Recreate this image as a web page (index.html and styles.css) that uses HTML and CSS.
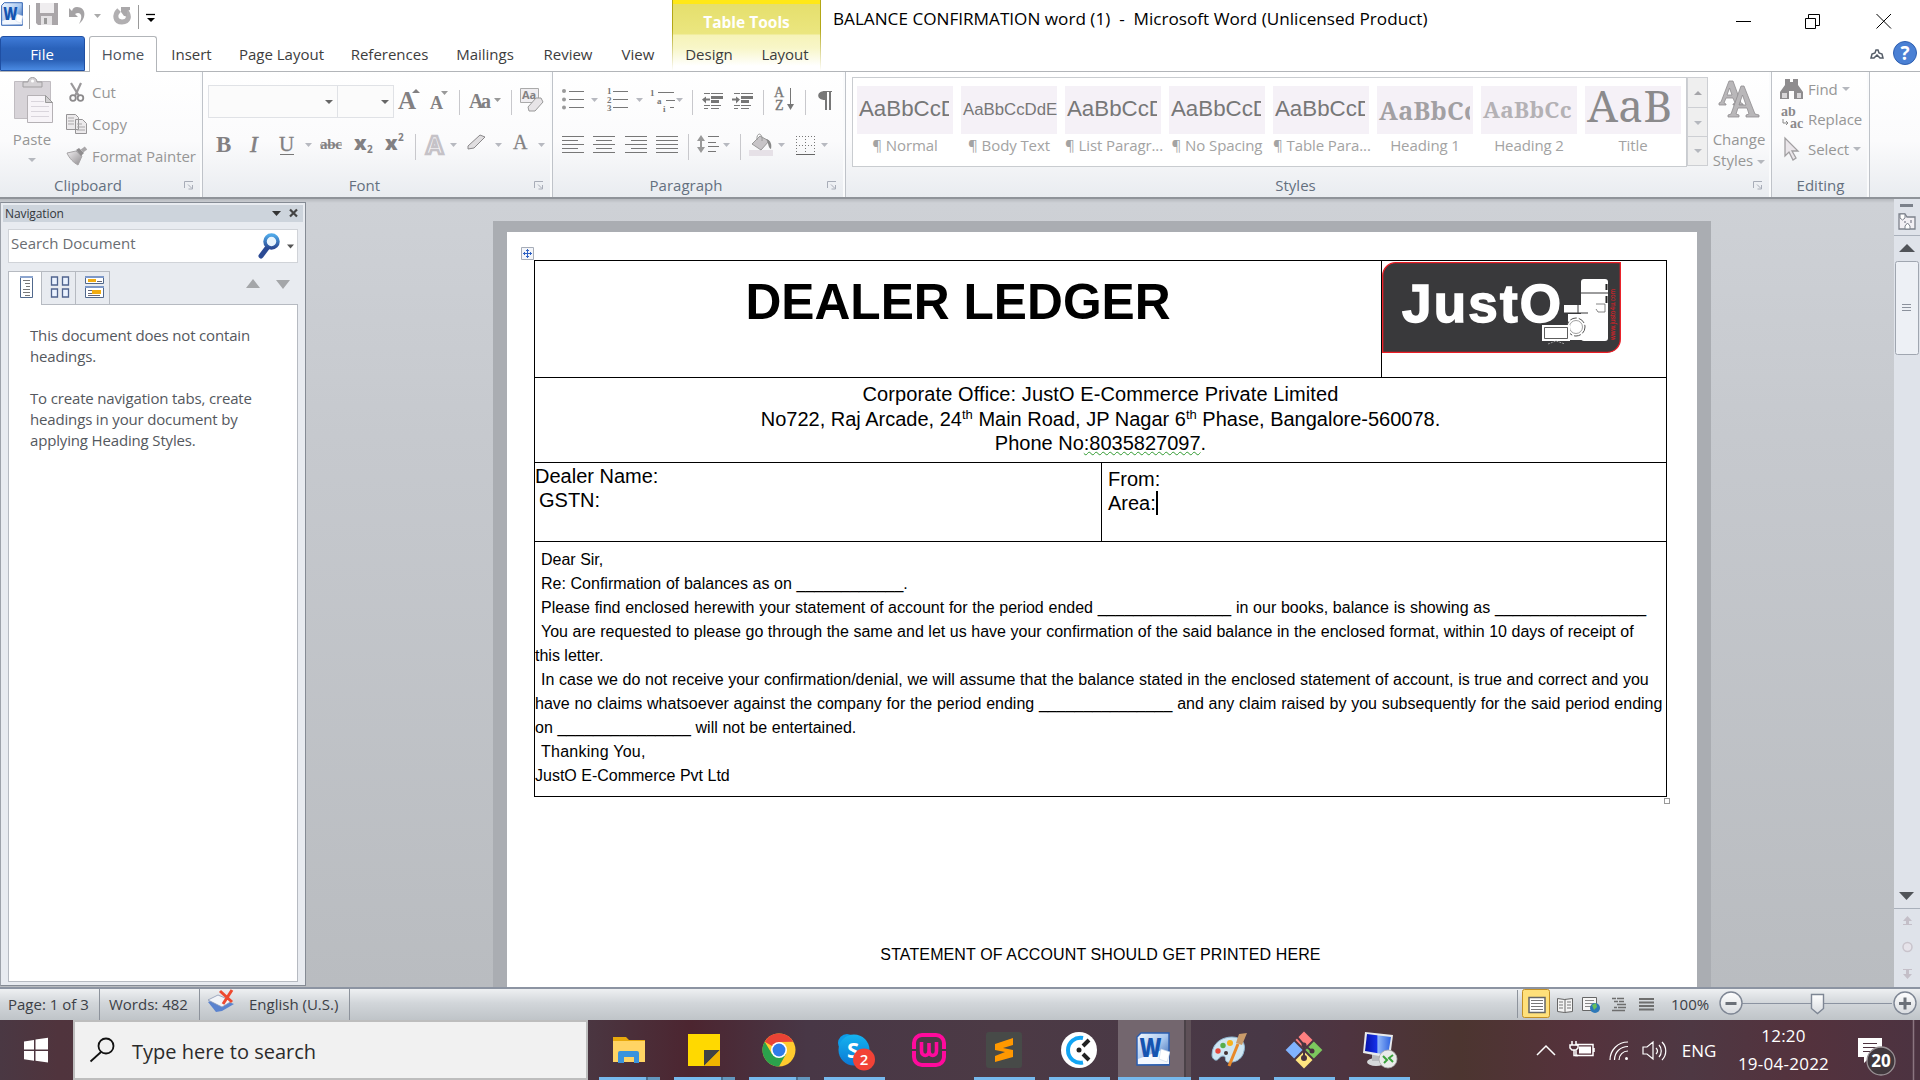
FILE: index.html
```html
<!DOCTYPE html>
<html lang="en">
<head>
<meta charset="utf-8">
<title>BALANCE CONFIRMATION word (1) - Microsoft Word</title>
<link rel="stylesheet" href="styles.css">
</head>
<body>
<svg class="defs" width="0" height="0" aria-hidden="true">
  <defs>
    <linearGradient id="gMetal" x1="0" y1="0" x2="1" y2="1"><stop offset="0" stop-color="#f0eef0"/><stop offset="1" stop-color="#8f8c8f"/></linearGradient>
    <linearGradient id="gBtn" x1="0" y1="0" x2="0" y2="1"><stop offset="0" stop-color="#fff"/><stop offset="1" stop-color="#d8dbdf"/></linearGradient>
    <linearGradient id="gWord" x1="0" y1="0" x2="1" y2="1"><stop offset="0" stop-color="#f4f9ff"/><stop offset=".5" stop-color="#a9c8ef"/><stop offset="1" stop-color="#2758a8"/></linearGradient>
    <linearGradient id="gScreen" x1="0" y1="0" x2="1" y2="0"><stop offset="0" stop-color="#0712a8"/><stop offset=".45" stop-color="#1430e8"/><stop offset=".5" stop-color="#8fb6f7"/><stop offset="1" stop-color="#2f63e0"/></linearGradient>
    <linearGradient id="gSkype" x1="0" y1="0" x2="0" y2="1"><stop offset="0" stop-color="#14b4f0"/><stop offset="1" stop-color="#0b78d4"/></linearGradient>
    <linearGradient id="gLens" x1="0" y1="0" x2="0" y2="1"><stop offset="0" stop-color="#4fa8e8"/><stop offset="1" stop-color="#2b4a94"/></linearGradient>
    <symbol id="launch" viewBox="0 0 10 9"><path d="M.5 7V.5H9M4 3.500l4 4M8.500 4v4h-4" fill="none" stroke="#a8adb8"/></symbol>
    <symbol id="word" viewBox="0 0 34 34">
      <path d="M5 1h28v32H1V5z" fill="url(#gWord)" stroke="#2a5db0" stroke-width="1.400"/>
      <path d="M2 27l24-9 7 3v11H2z" fill="#f4f8fe"/>
      <text x="3.500" y="25" font-family="Open Sans" font-weight="800" font-size="26" textLength="22" lengthAdjust="spacingAndGlyphs" fill="#1554b0">W</text>
      <path d="M25 17l9 3-3 10-8-3z" fill="#fff" stroke="#c3d3ea" stroke-width=".6"/>
    </symbol>
  </defs>
</svg>

<header class="top">
  <div class="quick">
    <svg viewBox="0 0 34 34" width="22" height="24" preserveAspectRatio="none"><use href="#word"/></svg>
    <svg viewBox="23 0 140 36" width="140" height="36">
      <path d="M29.500 5v24M138.500 5v24" stroke="#9a9a9a"/>
      <path d="M36 3h22v22H38l-2-2z" fill="#aaa6a9"/><path d="M40 3h14v10H40z" fill="#efedef"/><path d="M41 16h11v9H41z" fill="#e4e2e4"/><path d="M44 18h3v6h-3z" fill="#999"/>
      <path d="M69 8v9h9l-3-3c5-3 9 1 4 10 8-6 7-17-2-17-3 0-4 1-5 4z" fill="#a5a3a5"/>
      <path d="M94 14h7l-3.500 4z" fill="#aaa"/>
      <path d="M119 10c-5 5-4 12 3 12s8-6 4-11" fill="none" stroke="#b1afb1" stroke-width="5"/><path d="M121 7h9v3l-3 1v5h-3l-3-4z" fill="#aaa8aa"/>
      <path d="M146 14.500h9" stroke="#000" stroke-width="1.300"/><path d="M147 18h8l-4 4z"/>
    </svg>
  </div>
  <div class="context"><span>Table Tools</span></div>
  <div class="wintitle"><span class="caption">BALANCE CONFIRMATION word (1)&nbsp; -&nbsp; Microsoft Word (Unlicensed Product)</span>
    <svg viewBox="1730 0 190 36" width="190" height="36" fill="none" stroke="#000"><path d="M1736 21.500h15M1805.500 18.500h10v10h-10zM1808.500 18v-3.500h11v11h-3.500M1876.500 14l14.500 14.500M1891 14l-14.500 14.500"/></svg>
  </div>
  <nav class="tabs">
    <a class="tab file">File</a><a class="tab home">Home</a><a class="tab w69">Insert</a><a class="tab w111">Page Layout</a><a class="tab w105">References</a><a class="tab w86">Mailings</a><a class="tab w80">Review</a><a class="tab w64">View</a><a class="tab w74">Design</a><a class="tab w78">Layout</a>
    <svg class="help" viewBox="1860 36 60 35" width="60" height="35"><path d="M1871 58l1-4 3-1 1-3h2l1 3 3 1 1 4h-3l-3-3-3 3z" fill="none" stroke="#555d68" stroke-width="1.500"/><circle cx="1905" cy="53" r="11.500" fill="#4a80d4" stroke="#2e5fb0"/><text x="1905" y="60" text-anchor="middle" font-family="Open Sans" font-weight="700" font-size="19" fill="#fff">?</text></svg>
  </nav>
</header>

<section class="ribbon">
  <div class="group clip">
    <div class="body">
      <div class="big paste">
        <svg viewBox="8 76 48 50" width="48" height="50"><path d="M14.500 81.500h36v37h-36z" fill="#d8d4d9" stroke="#c0bcc1"/><path d="M23 87v-5h5c0-6 9-6 9 0h5v5z" fill="#d5d2d5" stroke="#a19fa1"/><circle cx="32.500" cy="81" r="1.500" fill="#fff"/><path d="M27.500 95.500h18l7 7v20h-25z" fill="#f7f4f8" stroke="#b5b1b5"/><path d="M45.500 95.500v7h7z" fill="#d2d0d2" stroke="#999"/><path d="M31 101.500h13M31 106.500h18M31 111.500h18M31 116.500h18" stroke="#d9d5dc"/></svg>
        <span>Paste</span><i class="arr"></i>
      </div>
      <div class="stack">
        <div class="cmd"><svg viewBox="64 80 26 24" width="26" height="24"><path d="M71 83l8 13M81 83l-6 13" stroke="#9a989a" stroke-width="2.200"/><circle cx="73" cy="98" r="2.800" fill="none" stroke="#8c8a8c" stroke-width="1.800"/><circle cx="80.500" cy="98" r="2.800" fill="none" stroke="#8c8a8c" stroke-width="1.800"/></svg>Cut</div>
        <div class="cmd"><svg viewBox="64 112 26 24" width="26" height="24"><path d="M66.500 114.500h9l3 3v12h-12zM75.500 119.500h7l4 4v10h-11z" fill="#eceaec" stroke="#969496"/><path d="M68 118h6M68 121h6M68 124h6M77 124h5M77 127h8M77 130h8" stroke="#a9a7a9"/></svg>Copy</div>
        <div class="cmd"><svg viewBox="64 144 26 24" width="26" height="24"><path d="M67 153l9-2 6 5-4 9c-4-2-9-7-11-12z" fill="url(#gMetal)" stroke="#a5a3a5"/><path d="M76 150l3-2 5 5-3 3z" fill="#8f8d8f"/><path d="M82 151l4-3" stroke="#a9a7a9" stroke-width="4"/></svg>Format Painter</div>
      </div>
    </div>
    <footer><span>Clipboard</span><svg width="10" height="9"><use href="#launch"/></svg></footer>
  </div>

  <div class="group font">
    <div class="tools row1">
      <div class="combo face"><i class="arr dark"></i></div><div class="combo size"><i class="arr dark"></i></div>
      <svg viewBox="395 85 158 34" width="158" height="34" font-family="Liberation Serif" font-weight="700" fill="#828082"><text x="399" y="109" font-size="25">A</text><path d="M413 93l4-4 4 4z"/><text x="431" y="109" font-size="18">A</text><path d="M442 91h7l-3.500 4zM495 98h7l-3.500 4z" fill="#999"/><text x="470" y="108" font-size="20" textLength="22">Aa</text><path d="M460.500 90v25M512.500 90v25" stroke="#c8c8cc"/><path d="M521.500 88.500h18v14h-18z" fill="#f0eef1" stroke="#aaa"/><text x="523" y="99" font-size="11" font-family="Open Sans">Aa</text><path d="M529 107l8-9 5 0 2 4-8 9-6 0z" fill="#e7e4e7" stroke="#999"/></svg>
    </div>
    <div class="tools row2">
      <svg viewBox="208 126 345 40" width="345" height="40" font-family="Liberation Serif" font-weight="700" fill="#828082"><text x="216" y="152" font-size="23">B</text><text x="250" y="152" font-size="23" font-style="italic" font-weight="400" stroke="#828082" stroke-width=".6">I</text><text x="279" y="151" font-size="21" font-weight="400" stroke="#828082" stroke-width=".3">U</text><path d="M280 154.500h14M320 145h22" stroke="#777"/><text x="320" y="149" font-size="15" textLength="22">abc</text><text x="354" y="150" font-size="20" font-family="Open Sans" font-weight="800">x</text><text x="367" y="153" font-size="10" font-family="Open Sans">2</text><text x="385" y="150" font-size="20" font-family="Open Sans" font-weight="800">x</text><text x="398" y="141" font-size="10" font-family="Open Sans">2</text><path d="M415.500 134v26" stroke="#c8c8cc"/><text x="426" y="154" font-size="25" font-family="Open Sans" fill="#f6f5f7" stroke="#c5c2c7" stroke-width="2.500">A</text><path d="M305 143h7l-3.500 4zM450 143h7l-3.500 4zM495 143h7l-3.500 4zM538 143h7l-3.500 4z" fill="#b7b9c0"/><path d="M468 146l12-11 5 2-11 11-6 1z" fill="#e0dee0" stroke="#8a888a"/><text x="513" y="149" font-size="20" font-weight="400" stroke="#888" stroke-width=".3">A</text></svg>
    </div>
    <footer><span>Font</span><svg width="10" height="9"><use href="#launch"/></svg></footer>
  </div>

  <div class="group para">
    <div class="tools row1">
      <svg viewBox="558 85 285 36" width="285" height="36" fill="#777"><g fill="#999"><circle cx="564" cy="91" r="2"/><circle cx="564" cy="99.500" r="2"/><circle cx="564" cy="107.500" r="2"/></g><path d="M569 91.500h15M569 99.500h15M569 107.500h15M613 91.500h15M613 99.500h15M613 107.500h15" stroke="#777"/><g font-family="Liberation Serif" font-weight="700" font-size="9"><text x="607" y="94">1</text><text x="607" y="103">2</text><text x="607" y="111">3</text><text x="650" y="96">1</text><text x="657" y="104">a</text><text x="663" y="112">i</text></g><path d="M658 92.500h16M666 100.500h9M670 107.500h4" stroke="#777"/><path d="M591 98h7l-3.500 4zM636 98h7l-3.500 4zM676 98h7l-3.500 4z" fill="#b7b9c0"/><path d="M692.500 90v25M763.500 90v25M805.500 90v25" stroke="#c8c8cc"/>
      <g id="dent"><path d="M704 93.500h6M711 93.500h12M704 105.500h6M711 105.500h10M711 108.500h8M704 108.500h4" stroke="#777"/><path d="M711 96h12v3h-12zM711 100h8v3h-8z"/></g><path d="M702 99.500l4-3v2h4v2h-4v3z"/>
      <use href="#dent" x="30"/><path d="M740 99.500l-4-3v2h-4v2h4v3z"/>
      <g font-family="Liberation Serif" font-size="14" stroke="#777" stroke-width=".3"><text x="774" y="97">A</text><text x="775" y="110">Z</text></g><path d="M790.500 88v19" stroke="#777"/><path d="M787 104h7l-3.500 6z"/>
      <path d="M825 91h7v1h-1v18h-2V92h-2v18h-2v-10c-9 0-9-9 0-9z"/></svg>
    </div>
    <div class="tools row2">
      <svg viewBox="558 126 285 40" width="285" height="40" fill="#777"><g stroke="#777"><path d="M562 136.500h22M562 140.500h16M562 144.500h22M562 148.500h16M562 152.500h22M593 136.500h22M596 140.500h16M593 144.500h22M596 148.500h16M593 152.500h22M625 136.500h22M631 140.500h16M625 144.500h22M631 148.500h16M625 152.500h22M656 136.500h22M656 140.500h22M656 144.500h22M656 148.500h22M656 152.500h22M708 136.500h11M708 142.500h8M708 146.500h11M708 151.500h8"/><path d="M796 154.500h19" stroke="#666"/><path d="M796.500 136v18M814.500 136v18M805.500 136v18M796 136.500h19M796 145.500h19" stroke-dasharray="1 2"/></g><path d="M697 141l4-6 4 6h-3v3h-2v-3zM697 147l4 6 4-6h-3v-3h-2v3z" fill="#999"/><path d="M688.500 134v26M740.500 134v26" stroke="#c8c8cc"/><path d="M723 143h7l-3.500 4zM778 143h7l-3.500 4zM821 143h7l-3.500 4z" fill="#b7b9c0"/><path d="M749 150h24v6h-24z" fill="#e6e1e7"/><path d="M752 144l8-8 9 5-8 9z" fill="#c7c4c7" stroke="#999"/><path d="M757 140c-1-8 6-8 5 1" fill="none" stroke="#999"/><path d="M766 139c5 1 6 6 5 10-3-1-2-5-5-10z" fill="#888"/></svg>
    </div>
    <footer><span>Paragraph</span><svg width="10" height="9"><use href="#launch"/></svg></footer>
  </div>

  <div class="group styles">
    <div class="body">
      <div class="gallery">
        <div class="style"><b class="p20">AaBbCcD</b><span>¶ Normal</span></div>
        <div class="style"><b class="p17">AaBbCcDdE</b><span>¶ Body Text</span></div>
        <div class="style"><b class="p20">AaBbCcD</b><span>¶ List Paragr...</span></div>
        <div class="style"><b class="p20">AaBbCcD</b><span>¶ No Spacing</span></div>
        <div class="style"><b class="p20">AaBbCcD</b><span>¶ Table Para...</span></div>
        <div class="style"><b class="h1">AaBbCc</b><span>Heading 1</span></div>
        <div class="style"><b class="h2">AaBbCc</b><span>Heading 2</span></div>
        <div class="style"><b class="ttl">AaB</b><span>Title</span></div>
      </div>
      <div class="scroller"><i class="arr up"></i><i class="arr"></i><i class="arr bar"></i></div>
      <div class="big change">
        <svg viewBox="1712 78 50 44" width="50" height="44" fill="#b9b7b9" stroke="#8f8d8f" stroke-width=".8"><path fill-rule="evenodd" d="M1717 105v-2l2-1 8-21h4l8 22 2 1v1h-10v-1l2-1-2-5h-7l-2 5 2 1v1zM1725 95h5l-2.500-7z"/><path fill-rule="evenodd" d="M1726 117v-2l3-1 10-28h3l11 28 4 1v2h-13v-2l3-1-2-6h-9l-2 6 3 1v2zM1737 105h7l-3.500-10z"/></svg>
        <span>Change</span><span>Styles <i class="arr"></i></span>
      </div>
    </div>
    <footer><span>Styles</span><svg width="10" height="9"><use href="#launch"/></svg></footer>
  </div>

  <div class="group edit">
    <div class="stack">
      <div class="cmd"><svg viewBox="1778 77 30 24" width="30" height="24"><path d="M1785 79h5v3h3v-3h5v6l5 7v7h-9v-8h-5v8h-9v-7l5-7z" fill="#8e8c8e"/><path d="M1782 93h5v5h-5zM1797 93h4v5h-4z" fill="#d8d6d8"/></svg>Find <i class="arr"></i></div>
      <div class="cmd"><svg viewBox="1778 107 30 24" width="30" height="24" font-family="Liberation Serif" font-weight="700" fill="#8b898b" font-size="14"><text x="1781" y="116">ab</text><text x="1790" y="128">ac</text><path d="M1783 119v4h5M1786 121l2 2-2 2" fill="none" stroke="#888"/></svg>Replace</div>
      <div class="cmd"><svg viewBox="1778 136 30 28" width="30" height="28"><path d="M1785 139v18l4-4 4 8 3-2-4-7h6z" fill="#eae6ea" stroke="#a19fa1" stroke-width="1.300"/></svg>Select <i class="arr"></i></div>
    </div>
    <footer><span>Editing</span></footer>
  </div>
</section>

<main class="work">
  <aside class="nav">
    <div class="navhead"><span>Navigation</span><svg viewBox="268 205 36 17" width="36" height="17"><path d="M273 211h9l-4.500 5z" fill="#333"/><path d="M291 209.500l7 7M298 209.500l-7 7" stroke="#444" stroke-width="2.200"/></svg></div>
    <div class="search"><span>Search Document</span><svg viewBox="255 230 42 32" width="42" height="32"><path d="M267 248l-6 8" stroke="#2b4a94" stroke-width="5" stroke-linecap="round"/><circle cx="271.500" cy="241.500" r="6.500" fill="#e8f4fd" stroke="url(#gLens)" stroke-width="3.500"/><path d="M287 244.500h7l-3.500 4z" fill="#555"/></svg></div>
    <div class="navtabs">
      <div class="nt on"><svg viewBox="9 271 34 33" width="34" height="33"><path d="M20.500 275.500h12v21h-12z" fill="#fff" stroke="#50688c"/><path d="M20 276h13" stroke="#8ca5cf" stroke-width="2"/><path d="M23 279.500h7M25 282.500h5M26 285.500h4M23 288.500h7M23 291.500h7M25 294.500h5" stroke="#777"/></svg></div>
      <div class="nt"><svg viewBox="42 271 34 33" width="34" height="33" fill="#eaf2ff" stroke="#50648e" stroke-width="1.300"><path d="M51.500 276h6v8h-6zM62.500 276h6v8h-6zM51.500 288h6v8h-6zM62.500 288h6v8h-6z"/></svg></div>
      <div class="nt"><svg viewBox="76 271 34 33" width="34" height="33"><path d="M85.500 275.500h18v7h-18zM85.500 285.500h18v11h-18z" fill="#fff" stroke="#50688c"/><path d="M85 276h19M85 286h19" stroke="#7d98c8" stroke-width="2"/><path d="M88 278h8v3h-8zM92 289h9v4h-9z" fill="#f0ac12"/><path d="M97 280.500h5M88 289.500h4M88 292.500h4M88 294.500h12" stroke="#667"/></svg></div>
      <svg class="updown" viewBox="240 271 58 33" width="58" height="33" fill="#a4a6a9"><path d="M247 288h14l-7-9zM277 280h14l-7 9z"/></svg>
    </div>
    <div class="navbody"><p>This document does not contain<br>headings.</p><p>To create navigation tabs, create<br>headings in your document by<br>applying Heading Styles.</p></div>
  </aside>

  <div class="canvas">
    <article class="page">
      <svg class="grip" viewBox="0 0 13 13" width="13" height="13"><path d="M.5.5h12v12H.5z" fill="#f4f6fa" stroke="#a7adb8"/><path d="M6.500 2v9M2 6.500h9M5 3.500h3M5 9.500h3M3.500 5v3M9.500 5v3" stroke="#2f62c4"/></svg>
      <div class="ledger">
        <div class="r r1">
          <h1>DEALER LEDGER</h1>
          <div class="logo"><svg viewBox="1382 262 239 91" width="239" height="91">
            <path d="M1396 262.700h224.300v76.300a13 13 0 0 1-13 13.300H1382.700v-76.300a13 13 0 0 1 13.300-13.300z" fill="#39393b" stroke="#ed1c24" stroke-width="1.300"/>
            <text x="1402" y="322" font-family="Liberation Sans" font-weight="700" font-size="53" textLength="159" fill="#fff" stroke="#fff" stroke-width="1.500">JustO</text>
            <rect x="1581" y="279" width="27" height="62" rx="3" fill="#fff"/><path d="M1564 305h24v8h-24zM1568 314h32v26h-32z" fill="#fff"/>
            <path d="M1581 293h27M1578 305v8M1564 313h24" stroke="#39393b"/><path d="M1606.500 284v6M1606.500 296v7" stroke="#222" stroke-width="2"/><path d="M1596 304h9v8h-7l-2-3" fill="none" stroke="#666" stroke-width=".8"/>
            <circle cx="1576" cy="327" r="9" fill="none" stroke="#555" stroke-dasharray="7 2"/><circle cx="1576" cy="327" r="6.500" fill="none" stroke="#777" stroke-width=".7"/>
            <path d="M1542 325h28v16h-28z" fill="#fff"/><path d="M1544.500 327.500h23v11h-23z" fill="#fff" stroke="#333" stroke-width=".8"/><path d="M1548 344l8-3 9 3" fill="none" stroke="#999" stroke-dasharray="2 1"/>
            <text transform="translate(1614.500 340) rotate(-90)" font-family="Liberation Sans" font-size="6.500" textLength="51" fill="#ed1c24">www.justo4u.com</text></svg></div>
        </div>
        <div class="r r2"><p class="corp">Corporate Office: JustO E-Commerce Private Limited</p><p>No722, Raj Arcade, 24<sup>th</sup> Main Road, JP Nagar 6<sup>th</sup> Phase, Bangalore-560078.</p><p>Phone No<u>:8035827097</u>.</p></div>
        <div class="r r3"><div class="cell dealer"><p>Dealer Name:</p><p class="gst">GSTN:</p></div><div class="cell from"><p>From:</p><p class="area">Area:</p></div></div>
        <div class="r r4">
          <p class="in">Dear Sir,</p>
          <p class="in l2">Re: Confirmation of balances as on ____________.</p>
          <p class="in l3">Please find enclosed herewith your statement of account for the period ended _______________ in our books, balance is showing as _________________</p>
          <p class="in l4">You are requested to please go through the same and let us have your confirmation of the said balance in the enclosed format, within 10 days of receipt of</p>
          <p>this letter.</p>
          <p class="in l6">In case we do not receive your confirmation/denial, we will assume that the balance stated in the enclosed statement of account, is true and correct and you</p>
          <p class="l7">have no claims whatsoever against the company for the period ending _______________ and any claim raised by you subsequently for the said period ending</p>
          <p class="l2">on _______________ will not be entertained.</p>
          <p class="in thanks">Thanking You,</p>
          <p>JustO E-Commerce Pvt Ltd</p>
        </div>
        <i class="corner"></i>
      </div>
      <p class="stmt">STATEMENT OF ACCOUNT SHOULD GET PRINTED HERE</p>
    </article>
  </div>

  <div class="vscroll"><svg viewBox="1894 199 26 788" width="26" height="788">
    <path d="M1900 204h13v3h-13z" fill="#7b818b"/><path d="M1899 214h6l2 3h8v12h-16z" fill="#f2f0f4" stroke="#7d828c" stroke-width="1.300"/><path d="M1900 214h5v4l-2.500 2-2.500-2zM1905 229v-3l2.500-3 2.500 3v3z" fill="#fff" stroke="#7d828c"/><path d="M1904 222h2M1911 220v3" stroke="#667"/>
    <path d="M1894 235.500h26M1894 908.500h26" stroke="#a9b0bb"/><path d="M1899 252h16l-8-8zM1899 892h15l-7.500 8z" fill="#505358"/>
    <rect x="1895.500" y="261.500" width="23" height="93" rx="2" fill="#edf0f5" stroke="#a0a6b0"/><path d="M1902 304.500h9M1902 307.500h9M1902 310.500h9" stroke="#8b919c"/>
    <g fill="#c4bfc8"><path d="M1903 921h9l-4.500-5zM1903 925h9v-1h-3v-3h-3v3h-3zM1903 974h9l-4.500 5zM1903 969h9v1h-3v4h-3v-4h-3z"/></g><circle cx="1907.500" cy="947" r="4.500" fill="#e6e3ea" stroke="#c9c4cc" stroke-width="1.500"/></svg></div>
</main>

<div class="status">
  <span class="s1">Page: 1 of 3</span><span class="s2">Words: 482</span>
  <span class="s3"><svg viewBox="205 991 30 26" width="30" height="26"><path d="M208 1004l10-4 16 6-12 7-6 1z" fill="#5a83cf"/><path d="M208 1002l10-5 14 6-10 6z" fill="#f2f4f8" stroke="#8c98b4" stroke-width=".8"/><path d="M220 993l12 11M232 992l-9 14" stroke="#ee4a30" stroke-width="3"/></svg>English (U.S.)</span>
  <div class="views">
    <svg viewBox="1517 989 150 31" width="150" height="31"><path d="M1517.500 990v28" stroke="#8d939c"/><rect x="1522.500" y="989.500" width="27" height="28" rx="2" fill="#ffe07a" stroke="#c28f26"/><path d="M1529 997.500h16v15h-16z" fill="#fff" stroke="#666" stroke-width="1.500"/><path d="M1531 1000.500h12M1531 1003.500h12M1531 1006.500h12M1531 1009.500h12" stroke="#777"/>
    <path d="M1557.500 998.500l7 1 8-1v13l-8 1-7-1zM1565 999v14" fill="#f4f4f4" stroke="#666"/><path d="M1559 1002h4M1559 1005h4M1559 1008h4M1567 1002h4M1567 1005h4M1567 1008h4" stroke="#777"/>
    <path d="M1582.500 997.500h14v13h-14z" fill="#f6f6f6" stroke="#666"/><path d="M1585 1000.500h9M1585 1003.500h9M1585 1006.500h6" stroke="#888"/><circle cx="1595" cy="1008" r="5" fill="#2d78b8"/><path d="M1592 1005l4-2 1 4-3 3z" fill="#66c05a"/>
    <path d="M1612 998.500h4M1617 998.500h7M1614 1001.500h4M1619 1001.500h5M1617 1004.500h9M1614 1007.500h3M1618 1007.500h8M1612 1010.500h13" stroke="#6e6e6e" stroke-width="1.600"/><path d="M1639 999h15M1639 1002.500h15M1639 1006h15M1639 1009.500h15" stroke="#6e6e6e" stroke-width="2"/></svg>
    <span>100%</span>
    <svg viewBox="1714 989 206 31" width="206" height="31"><path d="M1742 1003.500h150" stroke="#8b93a1"/><g fill="url(#gBtn)" stroke="#7e8694" stroke-width="1.400"><circle cx="1731" cy="1003" r="11"/><circle cx="1905" cy="1003" r="11"/><path d="M1811.500 994.500h12v14l-6 5-6-5z"/></g><path d="M1725.500 1003.500h11M1899 1003.500h12M1905 997.500v12" stroke="#6b7078" stroke-width="3"/></svg>
  </div>
</div>

<div class="taskbar">
  <svg class="start" viewBox="0 1020 73 60" width="73" height="60" fill="#fff"><path d="M24 1041.500l10-1.500v9.500H24zM35.500 1039.500l12.500-1.800v11.800H35.500zM24 1051h10v9.800l-10-1.500zM35.500 1051H48v11.600l-12.500-1.800z"/></svg>
  <div class="tsearch"><svg viewBox="88 1035 30 30" width="30" height="30" fill="none" stroke="#111" stroke-width="1.800"><circle cx="106" cy="1046" r="7.500"/><path d="M101 1052l-10.500 9.500"/></svg><span>Type here to search</span></div>
  <div class="apps">
    <div class="app two"><svg viewBox="606 1029 48 42" width="48" height="42"><path d="M613 1037h13l3 3h16v22h-32z" fill="#e8a90c"/><path d="M613 1041h32v21h-32z" fill="#ffd464"/><path d="M618 1063v-10a2 2 0 0 1 2-2h17a2 2 0 0 1 2 2v10h-5v-6h-10v6z" fill="#3a93dc"/></svg></div>
    <div class="app two"><svg viewBox="681 1029 48 42" width="48" height="42"><path d="M688 1034h32v32h-32z" fill="#ffd900"/><path d="M704 1050h16l-16 16z" fill="#414244"/><path d="M720 1050v16h-16z" fill="#f0b400"/></svg></div>
    <div class="app two"><svg viewBox="756 1029 48 42" width="48" height="42"><circle cx="779" cy="1050" r="16.500" fill="#ffcb2e"/><path d="M779 1050L764.700 1041.700A16.500 16.500 0 0 1 793.300 1041.700L779 1042z" fill="#e94335"/><path d="M764.700 1041.700A16.500 16.500 0 0 0 779 1066.500L786 1054 772 1054z" fill="#2ba24c"/><circle cx="779" cy="1050" r="8" fill="#fff"/><circle cx="779" cy="1050" r="6.400" fill="#2f7be8"/></svg></div>
    <div class="app"><svg viewBox="831 1029 48 42" width="48" height="42"><circle cx="847" cy="1043" r="9" fill="#0d9be8"/><circle cx="854" cy="1050" r="15.500" fill="url(#gSkype)"/><text x="847" y="1058" font-family="Open Sans" font-weight="700" font-size="22" fill="#fff">S</text><circle cx="864" cy="1059.500" r="11" fill="#f24236"/><text x="864" y="1065" text-anchor="middle" font-family="Open Sans" font-weight="600" font-size="15" fill="#fff">2</text></svg></div>
    <div class="app idle"><svg viewBox="906 1029 48 42" width="48" height="42"><rect x="914" y="1035" width="30" height="30" rx="8" fill="none" stroke="#ff0a9c" stroke-width="4"/><path d="M911 1050h7M940 1050h7" stroke="#4a3743" stroke-width="2"/><path d="M921.500 1042v9c0 6 7.500 6 7.500 0v-8 8c0 6 7.500 6 7.500 0v-9" fill="none" stroke="#ff0a9c" stroke-width="3.600"/></svg></div>
    <div class="app"><svg viewBox="981 1029 48 42" width="48" height="42"><rect x="986" y="1032" width="36" height="36" rx="3" fill="#474a48"/><path d="M995 1044l18-6v7l-10 3 10 2v7l-18 5v-6l10-4-10-2z" fill="#ff9800"/></svg></div>
    <div class="app"><svg viewBox="1056 1029 48 42" width="48" height="42"><circle cx="1079" cy="1050" r="18" fill="#fff"/><path d="M1083 1038a12.500 12.500 0 1 0 0 24.500" fill="none" stroke="#12a5f4" stroke-width="4"/><circle cx="1079" cy="1050" r="2.500" fill="#222"/><path d="M1083 1046l6-6M1083 1054l6 6" stroke="#222" stroke-width="4"/></svg></div>
    <div class="app active"><svg width="34" height="34"><use href="#word"/></svg></div>
    <div class="app"><svg viewBox="1206 1029 48 42" width="48" height="42"><path d="M1212 1055c0-12 10-18 20-18s14 7 12 14c-2 10-11 12-17 11-3-2 0-6-4-6s-4 5-8 4c-2-1-3-3-3-5z" fill="#cfe6f3" stroke="#90b8d2"/><circle cx="1218" cy="1051" r="2.700" fill="#e5483b"/><circle cx="1223" cy="1045.500" r="2.700" fill="#57ae4b"/><circle cx="1230" cy="1043" r="3" fill="#f7b21e"/><circle cx="1226" cy="1053" r="2" fill="#433"/><path d="M1238 1044l-9 22" stroke="#e88a2a" stroke-width="3"/><path d="M1236 1043l3-9 8-1-5 12z" fill="#c99b6a"/></svg></div>
    <div class="app"><svg viewBox="1281 1029 48 42" width="48" height="42"><g transform="rotate(45 1304 1050)"><path d="M1291 1037h12v12h-12z" fill="#ff8080"/><path d="M1305 1037h12v12h-12z" fill="#7cc95e"/><path d="M1291 1051h12v12h-12z" fill="#80b3ff"/><path d="M1305 1051h12v12h-12z" fill="#ffe680"/></g><path d="M1297 1037l7 8v12M1304 1045l8 6" fill="none" stroke="#4a3340" stroke-width="2"/><circle cx="1304" cy="1045" r="2.500" fill="#4a3340"/><circle cx="1304" cy="1058" r="3" fill="#4a3340"/><circle cx="1312" cy="1051" r="2.500" fill="#4a3340"/></svg></div>
    <div class="app"><svg viewBox="1356 1029 48 42" width="48" height="42"><ellipse cx="1376" cy="1062" rx="9" ry="4" fill="#d6d8da"/><path d="M1372 1053h7v8h-7z" fill="#b8babd"/><path d="M1365 1032l28 3-3 23-27-5z" fill="#e8eaec"/><path d="M1367 1034l24 3-3 18-23-4z" fill="url(#gScreen)"/><circle cx="1388" cy="1059" r="9" fill="#e9ebe9" stroke="#aaa" stroke-width=".8"/><path d="M1383 1056l4 4-3 3M1393 1055l-4 3 4 4" fill="none" stroke="#3aa23a" stroke-width="2"/></svg></div>
  </div>
  <div class="tray">
    <svg viewBox="1530 1020 146 60" width="146" height="60" fill="none" stroke="#fff" stroke-width="1.500"><path d="M1537 1055l9-9 9 9"/><path d="M1576 1044.500h17v11h-17v-5M1594 1048v4"/><path d="M1579 1046.500h12v7h-12z" fill="#fff" stroke="none"/><path d="M1572 1041v4M1576 1041v4M1570 1045h8v3l-2 2h-4l-2-2zM1574 1050v5.500h4"/><g stroke-width="1.200"><path d="M1610 1060c0-10 8-18 18-18M1614.500 1060c0-8 6-13.500 13.500-13.500M1619 1060c0-5 4-9 9-9"/><circle cx="1626.500" cy="1058.500" r="1.500" fill="#fff" stroke="none"/><path d="M1643 1047v7h4l6 5v-17l-6 5zM1656 1048c2 2 2 4 0 6M1659 1045c3 3 3 9 0 12M1662 1042c5 5 5 13 0 18"/></g></svg>
    <span class="lang">ENG</span>
    <div class="clock"><span>12:20</span><span>19-04-2022</span></div>
    <svg viewBox="1845 1020 75 60" width="75" height="60"><path d="M1858 1038h24v19h-12l-6 6v-6h-6z" fill="#fff"/><path d="M1863 1043.500h14M1863 1047.500h14M1863 1051.500h9" stroke="#4f3340" stroke-width="1.200"/><circle cx="1881" cy="1061" r="14" fill="#40373c" stroke="#9b9397" stroke-width="1.300"/><text x="1881" y="1067" text-anchor="middle" font-family="Open Sans" font-weight="700" font-size="17" fill="#fff">20</text><path d="M1913.500 1020v60" stroke="#8b7580" stroke-width="1.500"/></svg>
  </div>
</div>
</body>
</html>
```
FILE: styles.css
```css
* { box-sizing: border-box; }
html, body { margin: 0; height: 1080px; overflow: hidden; }
body { width: 1920px; display: flex; flex-direction: column; background: #fff; font: 15px/20px "Open Sans", "Noto Sans", sans-serif; color: #3d3d3d; }
p, h1 { margin: 0; }
svg { display: block; flex: none; }
.defs { position: absolute; }

/* title bar and tabs */
.top { height: 72px; display: grid; grid-template: 36px 36px / 672px 149px 1fr; background: #fff; }
.quick { grid-area: 1 / 1; display: flex; align-items: flex-start; padding-left: 1px; }
.quick svg:first-child { margin-top: 2px; }
.context { grid-area: 1 / 2 / 3 / 3; border-left: 1px solid #b9ad1c; border-right: 1px solid #b9ad1c; border-image: linear-gradient(#b3a716 0 40%, #fff 97%) 1; background: linear-gradient(#ffe817 0 4px, #e5df6c 4px, #ebe680 34px, #f6f3b8 35px, #f8f6c8 48px, #fff 66px); text-align: center; padding-top: 12px; color: #fff; font-weight: 700; font-size: 15.500px; }
.wintitle { grid-area: 1 / 3; display: flex; justify-content: space-between; align-items: center; padding-left: 12px; color: #000; }
.caption { font-size: 17.150px; line-height: 36px; white-space: nowrap; padding-top: 1px; }
.tabs { grid-area: 2 / 1 / 3 / 4; display: flex; border-bottom: 1px solid #b2b5b9; z-index: 1; }
.tab { display: block; line-height: 36px; text-align: center; height: 35px; }
.file { width: 85px; margin-right: 4px; padding-right: 1px; color: #fff; border: 1px solid #1f4fa3; border-radius: 3px 3px 0 0; background: linear-gradient(#3f7bd8, #2a62ba 35%, #2a60b6 70%, #4a8ae2); line-height: 34px; }
.home { width: 68px; height: 36px; border: 1px solid #b2b5b9; border-bottom: 0; border-radius: 3px 3px 0 0; background: #fff; line-height: 34px; color: #4c535c; }
.w69 { width: 69px; } .w111 { width: 111px; } .w105 { width: 105px; } .w86 { width: 86px; } .w80 { width: 80px; } .w64 { width: 60px; margin-right: 4px; } .w74 { width: 74px; } .w78 { width: 78px; }
.help { margin-left: auto; }

/* ribbon */
.ribbon { height: 127px; display: flex; background: linear-gradient(#fff, #fbfbfc 55%, #e9ecf0); border-bottom: 2px solid #8f9399; color: #969696; }
.group { display: flex; flex-direction: column; border-right: 1px solid #bfc3c9; box-shadow: inset -2px 0 #fafbfc; }
.group footer { margin-top: auto; height: 24px; display: grid; grid-template-columns: 1fr 26px; color: #64707f; text-align: center; line-height: 24px; }
.edit footer { grid-template-columns: 1fr; }
.group footer svg { margin: 8px 0 0 8px; }
.body { display: flex; }
.clip { width: 203px; } .font { width: 350px; } .para { width: 293px; } .styles { width: 926px; } .edit { width: 98px; }
.arr { display: inline-block; border: 4px solid transparent; border-top-color: #b5b8be; border-bottom: 0; vertical-align: 2px; }
.arr.dark { border-top-color: #666; }
.arr.up { border-top: 0; border-bottom: 4px solid #a5a5a9; }
.big { display: flex; flex-direction: column; align-items: center; }
.big span { line-height: 21px; }
.paste { width: 64px; padding-top: 4px; }
.paste span { margin: 3px 0 8px; }
.stack { display: flex; flex-direction: column; }
.clip .stack { padding-top: 4px; }
.cmd { display: flex; align-items: center; height: 32px; gap: 2px; white-space: nowrap; letter-spacing: -.05px; }
.cmd .arr { margin-left: 4px; }
.tools { display: flex; align-items: flex-start; padding-left: 5px; }
.row1 { padding-top: 13px; height: 54px; }
.row2 { height: 42px; }
.combo { height: 33px; border: 1px solid #e0e2e6; background: #fbfbfb; display: flex; justify-content: flex-end; align-items: center; padding-right: 4px; }
.face { width: 130px; border-right: 0; } .size { width: 57px; }
.styles .body { padding: 5px 0 0 6px; }
.gallery { width: 835px; height: 90px; border: 1px solid #c9ccd0; background: #fff; display: flex; gap: 8px; padding: 8px 0 0 4px; overflow: hidden; }
.style { width: 96px; flex: none; text-align: center; color: #a3a3a3; white-space: nowrap; }
.style b { display: block; height: 48px; background: #f5f1f7; overflow: hidden; padding: 0 3px; font: 20px/48px "Liberation Sans", Arial, sans-serif; color: #777; text-align: left; }
.style span { display: block; line-height: 23px; letter-spacing: -.1px; }
.style .p20 { font-size: 22.300px; line-height: 46px; border-right: 4px solid #f5f1f7; padding: 0 0 0 2px; }
.style .p17 { font-size: 16.800px; padding-left: 2px; }
.style .h1, .style .h2, .style .ttl { font-family: "Noto Serif", "Liberation Serif", serif; font-weight: 700; color: #a2a0a3; font-size: 25px; letter-spacing: .3px; padding-left: 2px; border-right: 3px solid #f5f1f7; padding-right: 0; }
.style .h2 { color: #b4b1b5; font-size: 22.500px; }
.style .ttl { font-weight: 400; font-size: 44px; line-height: 38px; color: #8b8a8c; }
.scroller { width: 21px; height: 89px; border: 1px solid #cdcfd3; background: linear-gradient(#cdcfd3, #cdcfd3) 0 29px / 100% 1px no-repeat, linear-gradient(#cdcfd3, #cdcfd3) 0 58px / 100% 1px no-repeat, #efefef; display: grid; grid-template-rows: 30px 29px 1fr; place-items: center; }
.scroller .bar { box-shadow: 0 -6px 0 -4px #b5b8be; }
.change { width: 60px; margin-left: 1px; padding-top: 1px; }
.change svg + span { margin-top: 7px; }
.edit .stack { padding: 2px 0 0 6px; }
.edit .cmd { height: 30px; gap: 0; }

/* workspace */
.work { height: 788px; display: flex; background: linear-gradient(#b6b9be 0, #ced1d6 4px, #c6c9ce 30%, #b9bcc0); }
.nav { width: 306px; margin-top: 3px; height: 784px; border: 1px solid #858b94; border-left-color: #9da2aa; background: #e8ebf0; padding: 2px; display: flex; flex-direction: column; }
.navhead { height: 17px; background: #cdd4dc; display: flex; justify-content: space-between; font-size: 12px; line-height: 17px; padding-left: 2px; color: #33373d; }
.navhead span { letter-spacing: -.1px; }
.search { margin: 7px 5px 8px; height: 34px; border: 1px solid #d0d3d8; background: #fff; display: flex; justify-content: space-between; align-items: center; padding-left: 2px; color: #6a6d72; }
.search span { padding-bottom: 6px; }
.navtabs { display: flex; margin: 0 5px; height: 34px; }
.nt { width: 34px; height: 34px; border: 1px solid #b6bac1; border-left-width: 0; overflow: hidden; }
.nt.on { border-left-width: 1px; border-bottom: 0; background: #fff; }
.updown { flex: 1; border-bottom: 1px solid #b6bac1; height: 34px; padding-left: 128px; }
.navbody { flex: 1; margin: 0 5px 1px; border: 1px solid #b6bac1; border-top: 0; background: #fff; padding: 20px 0 0 21px; color: #54585e; line-height: 21px; letter-spacing: -.16px; }
.navbody p + p { margin-top: 21px; }
.canvas { flex: 1; padding: 22px 183px 0 187px; overflow: hidden; }
.page { position: relative; height: 790px; background: #fff; border: 14px solid #aaadb2; border-top-width: 11px; border-bottom: 0; padding: 28px 30px 0 27px; color: #000; font: 16px/24px "Liberation Sans", Arial, sans-serif; }
.grip { position: absolute; left: 14px; top: 15px; }
.ledger { position: relative; border: 1px solid #000; border-bottom: 0; width: 1133px; }
.r { border-bottom: 1px solid #000; }
.r1 { height: 117px; display: grid; grid-template-columns: 846px 1fr; }
.r1 h1 { font-size: 49.700px; line-height: 57px; padding-top: 13px; text-align: center; }
.logo { border-left: 1px solid #000; padding-top: 1px; }
.r2 { height: 85px; padding-top: 4px; text-align: center; font-size: 20px; line-height: 24.500px; white-space: nowrap; }
.r2 sup { font-size: 13px; line-height: 0; vertical-align: 7px; }
.r2 .corp { letter-spacing: .1px; }
.r2 u { text-decoration: underline wavy #2f9a2f 1px; text-underline-offset: 1px; }
.r3 { height: 79px; display: grid; grid-template-columns: 566px 1fr; font-size: 20px; }
.dealer { padding-top: 1px; }
.gst { padding-left: 4px; }
.from { border-left: 1px solid #000; padding: 4px 0 0 6px; }
.area { width: max-content; border-right: 2px solid #000; }
.r4 { height: 255px; padding-top: 6px; white-space: nowrap; }
.in { padding-left: 6px; }
.l2 { word-spacing: .2px; } .l3 { word-spacing: .29px; } .l4 { word-spacing: .1px; } .l6 { word-spacing: .22px; } .l7 { word-spacing: .29px; }
.thanks { letter-spacing: .25px; }
.corner { position: absolute; right: -4px; bottom: -7px; width: 6px; height: 6px; border: 1px solid #999; background: #fff; }
.stmt { text-align: center; padding-top: 146px; letter-spacing: .12px; }
.vscroll { width: 26px; background: #dfe3ea; }

/* status bar */
.status { height: 33px; border-top: 2px solid #8c94a2; background: linear-gradient(#eef0f2, #d2d6da 45%, #bfc4c8); display: flex; line-height: 30px; color: #3c4046; }
.status > span { border-right: 1px solid #8d939c; white-space: nowrap; }
.s1 { width: 100px; padding-left: 8px; } .s2 { width: 100px; padding-left: 9px; }
.s3 { width: 150px; display: flex; align-items: flex-start; gap: 14px; padding-left: 5px; }
.views { margin-left: auto; display: flex; }
.views span { width: 47px; padding-left: 4px; }

/* taskbar */
.taskbar { height: 60px; display: flex; background: linear-gradient(90deg, #4a3843, #50343d 3%, #4a3843 30%, #4c2530 36%, #483746 42%, #4c3a45 52%, #483846 66%, #4e3440 70%, #4c3530 76%, #55323c 82%, #4e3843 88%, #54323d 94%, #4c3341); color: #fff; }
.tsearch { width: 515px; border: 2px solid #bdbdbd; background: #f1f1f1; color: #2b2b2b; display: flex; align-items: center; gap: 14px; padding-left: 13px; font-size: 20px; }
.tsearch span { padding-top: 3px; }
.apps { display: flex; padding-left: 4px; }
.app { width: 75px; display: flex; justify-content: center; align-items: center; background: linear-gradient(#76b9ed, #76b9ed) 7px 57px / 61px 3px no-repeat; }
.app.two { background: linear-gradient(90deg, #76b9ed 47px, #48708f 47px 49px, #6397be 49px) 7px 57px / 61px 3px no-repeat; }
.app.idle { background: none; }
.app.active { width: 73px; margin: 0 1px; padding-right: 4px; padding-bottom: 3px; background: linear-gradient(#76b9ed, #76b9ed) 0 57px / 73px 3px no-repeat, linear-gradient(90deg, #73666e 66px, #4b4248 66px 68px, #5e5057 68px); }
.tray { margin-left: auto; display: flex; }
.lang { width: 46px; text-align: center; line-height: 62px; font-size: 17px; }
.clock { width: 123px; display: flex; flex-direction: column; align-items: center; justify-content: center; font-size: 17px; line-height: 28px; letter-spacing: .25px; padding-bottom: 1px; }
```
